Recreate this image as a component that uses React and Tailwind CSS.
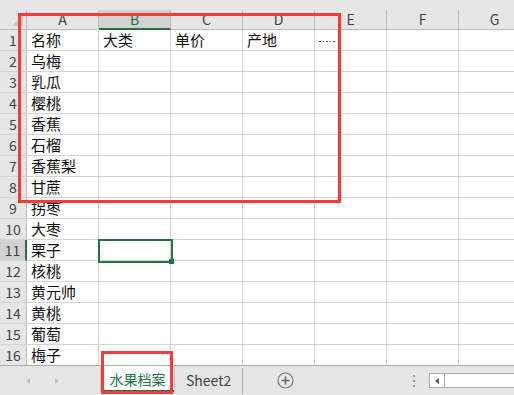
const cols = ['A', 'B', 'C', 'D', 'E', 'F', 'G']
const names = ['名称', '乌梅', '乳瓜', '樱桃', '香蕉', '石榴', '香蕉梨', '甘蔗', '拐枣', '大枣', '栗子', '核桃', '黄元帅', '黄桃', '葡萄', '梅子']
const row1 = { B: '大类', C: '单价', D: '产地' }

const font = { fontFamily: '"Noto Sans CJK SC", "Liberation Sans", sans-serif' }

function Grid() {
  return (
    <div className="grid grid-cols-[27px_repeat(7,72px)] auto-rows-[21px] grid-rows-[20px]">
      {/* header row */}
      <div className="relative bg-[#e6e6e6] border-r border-b border-[#bdbdbd]">
        <div className="absolute right-[3px] bottom-[3px] w-0 h-0 border-l-[11px] border-l-transparent border-b-[11px] border-b-[#c8c8c8]" />
      </div>
      {cols.map(c => (
        <div
          key={c}
          className={`flex items-center justify-center text-[14px] border-r border-[#bdbdbd] ${
            c === 'B'
              ? 'bg-[#d2d2d2] text-[#217346] border-b-2 border-b-[#217346]'
              : 'bg-[#e6e6e6] text-[#444] border-b border-b-[#bdbdbd]'
          }`}
        >
          {c}
        </div>
      ))}

      {names.map((n, i) => {
        const r = i + 1
        const sel = r === 11
        return [
          <div
            key={`h${r}`}
            className={`flex items-center justify-center text-[14px] border-b border-[#d4d4d4] ${
              sel
                ? 'bg-[#d2d2d2] text-[#444] border-r-2 border-r-[#217346]'
                : 'bg-[#e6e6e6] text-[#444] border-r border-r-[#bdbdbd]'
            }`}
          >
            {r}
          </div>,
          ...cols.map(c => (
            <div
              key={`${c}${r}`}
              className="flex items-center pl-[4px] bg-white text-[15px] text-[#111] border-r border-b border-[#d4d4d4] overflow-hidden whitespace-nowrap"
            >
              {c === 'A' ? n : r === 1 ? row1[c] : null}
              {c === 'E' && r === 1 && (
                <div className="flex gap-[2px] mt-[3px]">
                  {[0, 1, 2, 3, 4].map(k => (
                    <div key={k} className="w-[1.5px] h-[1.5px] bg-[#444]" />
                  ))}
                </div>
              )}
            </div>
          )),
        ]
      })}
    </div>
  )
}

function TabBar() {
  return (
    <div className="flex h-[30px] bg-[#e6e6e6] border-t border-[#ababab]">
      <div className="flex items-center w-[100px] shrink-0 pl-[26px] gap-[25px]">
        <div className="w-0 h-0 border-y-[3px] border-y-transparent border-r-[4px] border-r-[#c0c0c0]" />
        <div className="w-0 h-0 border-y-[3px] border-y-transparent border-l-[4px] border-l-[#c0c0c0]" />
      </div>
      <div className="relative flex items-center justify-center w-[75px] h-[26px] bg-white border-x border-[#c6c6c6] text-[14px] text-[#217346]">
        水果档案
        <div className="absolute left-0 right-0 bottom-0 h-[2px] bg-[#217346]" />
      </div>
      <div className="flex items-center h-[26px] w-[68px] pl-[11px] text-[14px] text-[#444] border-r border-[#ababab] my-auto">
        Sheet2
      </div>
      <div className="flex items-center justify-center w-[84px]">
        <svg width="17" height="17" viewBox="0 0 17 17">
          <circle cx="8.5" cy="8.5" r="7.5" fill="none" stroke="#777" strokeWidth="1.2" />
          <path d="M8.5 4.5v8M4.5 8.5h8" stroke="#666" strokeWidth="1.6" />
        </svg>
      </div>
      <div className="flex-1 flex items-center justify-end pr-[14px]">
        <div className="flex flex-col gap-[3px]">
          <div className="w-[2px] h-[2px] bg-[#999]" />
          <div className="w-[2px] h-[2px] bg-[#999]" />
          <div className="w-[2px] h-[2px] bg-[#999]" />
        </div>
      </div>
      <div className="flex items-center w-[85px] shrink-0">
        <div className="flex w-full h-[15px] bg-white border border-[#ababab] border-r-0">
          <div className="flex items-center justify-center w-[15px] border-r border-[#ababab]">
            <div className="w-0 h-0 border-y-[3px] border-y-transparent border-r-[4px] border-r-[#555]" />
          </div>
        </div>
      </div>
    </div>
  )
}

export default function App() {
  return (
    <div className="relative w-[514px] h-[395px] overflow-hidden bg-[#e6e6e6] select-none" style={font}>
      <div className="h-[10px] bg-[#e6e6e6]" />
      <div className="h-[355px] overflow-hidden">
        <Grid />
      </div>
      <TabBar />
      <div className="h-[4px] bg-[#e9e9e9] border-t border-[#c8c8c8]" />

      {/* selected cell B11 */}
      <div className="absolute left-[98px] top-[239px] w-[75px] h-[24px] border-2 border-[#217346]" />
      <div className="absolute left-[169px] top-[259px] w-[5px] h-[5px] bg-[#217346]" />

      {/* red annotations */}
      <div className="absolute left-[18px] top-[13px] w-[323px] h-[190px] border-[3px] border-[#f23c3c]" />
      <div className="absolute left-[101px] top-[351px] w-[72px] h-[43px] border-[3px] border-[#f23c3c]" />
    </div>
  )
}
